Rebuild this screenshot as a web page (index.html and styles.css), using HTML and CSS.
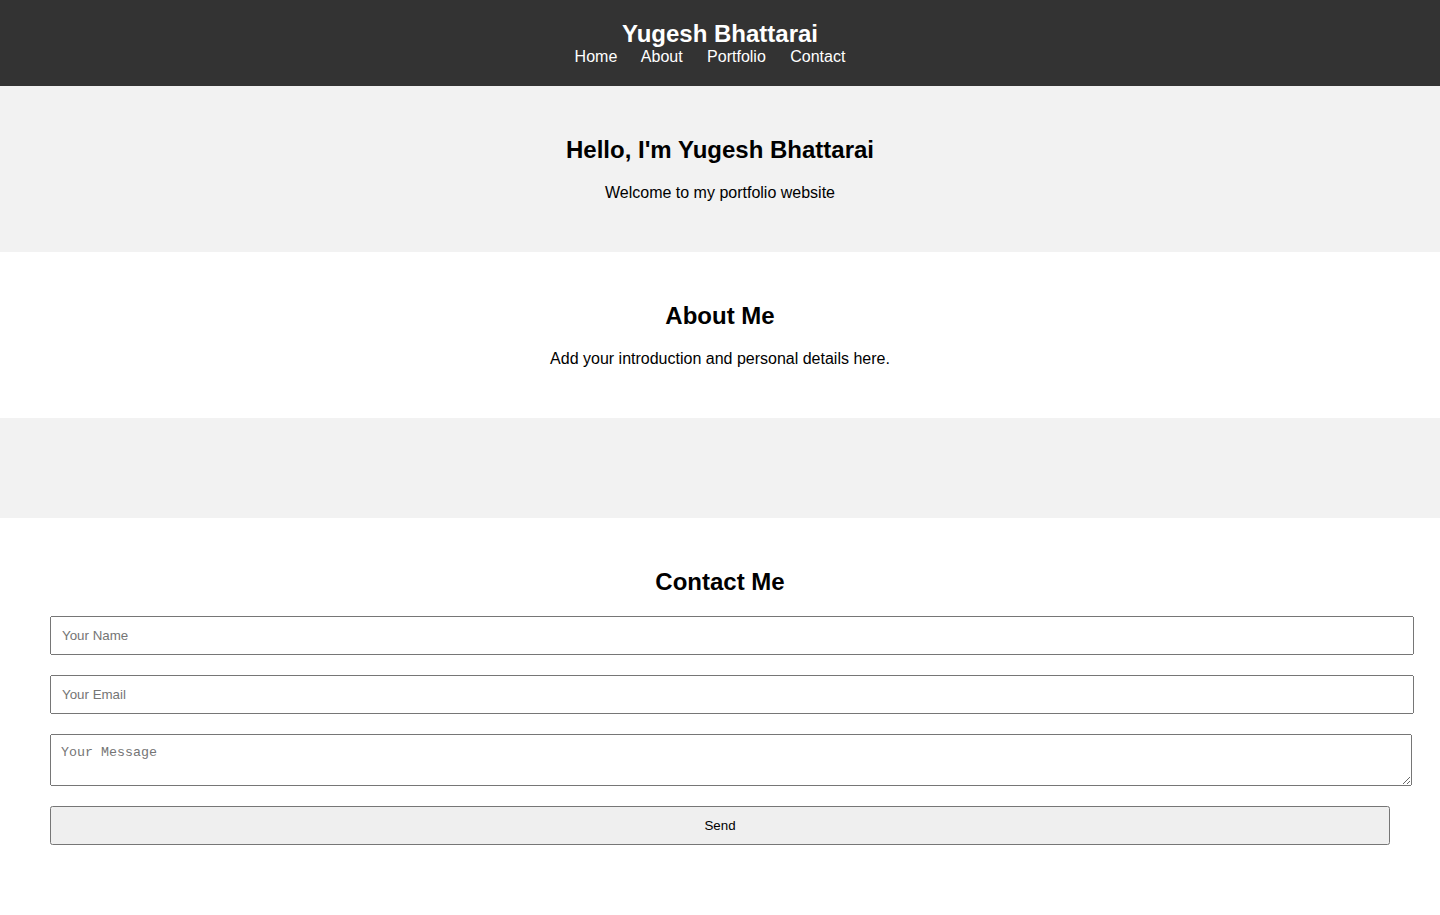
FILE: index.html
```html
<!DOCTYPE html>
<html lang="en">
<head>
<meta charset="utf-8">
<title>Yugesh Bhattarai</title>
<link rel="stylesheet" href="styles.css">
</head>
<body>
<header class="site-header">
  <h1 class="site-title">Yugesh Bhattarai</h1>
  <nav class="site-nav">
    <a href="#home">Home</a>
    <a href="#about">About</a>
    <a href="#portfolio">Portfolio</a>
    <a href="#contact">Contact</a>
  </nav>
</header>
<section class="section section-alt" id="home">
  <h2>Hello, I'm Yugesh Bhattarai</h2>
  <p>Welcome to my portfolio website</p>
</section>
<section class="section" id="about">
  <h2>About Me</h2>
  <p>Add your introduction and personal details here.</p>
</section>
<section class="section section-alt" id="portfolio"></section>
<section class="section" id="contact">
  <h2>Contact Me</h2>
  <form class="contact-form">
    <input class="field" type="text" placeholder="Your Name">
    <input class="field" type="email" placeholder="Your Email">
    <textarea class="field field-area" placeholder="Your Message"></textarea>
    <button class="send" type="button">Send</button>
  </form>
</section>
</body>
</html>
```
FILE: styles.css
```css
body {
  margin: 0;
  font-family: "Liberation Sans", Arial, sans-serif;
  color: #000;
  background: #fff;
}
.site-header {
  background: #333;
  color: #fff;
  padding: 20px;
  text-align: center;
}
.site-title {
  margin: 0;
  font-size: 24px;
  line-height: 28px;
}
.site-nav {
  line-height: 18px;
  font-size: 16px;
}
.site-nav a {
  color: #fff;
  text-decoration: none;
  margin-right: 20px;
}
.section {
  padding: 50px;
  text-align: center;
}
.section-alt {
  background: #f2f2f2;
}
.section h2 {
  margin: 0 0 20px;
  font-size: 24px;
  line-height: 28px;
}
.section p {
  margin: 0;
  font-size: 16px;
  line-height: 18px;
}
.contact-form {
  text-align: left;
}
.field {
  display: block;
  width: 100%;
  padding: 10px;
  margin: 0 0 20px;
  font-family: "Liberation Sans", Arial, sans-serif;
  font-size: 13.333px;
}
.field-area {
  font-family: "Liberation Mono", monospace;
}
.send {
  display: block;
  width: 100%;
  padding: 10px;
  font-family: "Liberation Sans", Arial, sans-serif;
  font-size: 13.333px;
}
```
